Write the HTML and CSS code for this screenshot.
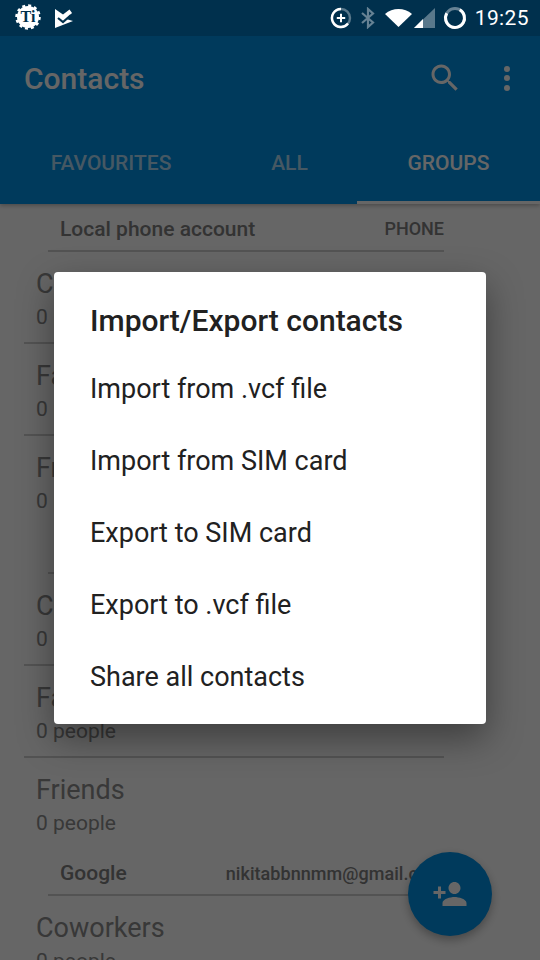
FILE: index.html
```html
<!DOCTYPE html>
<html lang="en">
<head>
    <meta charset="UTF-8">
    <meta name="viewport" content="width=device-width, initial-scale=1.0">
    <title>Contacts</title>
    <link rel="stylesheet" href="styles.css">
</head>
<body>
    <div class="screen">
        <div class="status-bar">
            <div class="status-left">
                <span class="ti-badge">
                    <svg width="28" height="28" viewBox="0 0 28 28">
                        <circle cx="14" cy="14" r="11" fill="#fff"/>
                        <circle cx="14" cy="14" r="11.500" fill="none" stroke="#fff" stroke-width="2.500" stroke-dasharray="3 3"/>
                    </svg>
                    <span class="ti-text">Ti</span>
                </span>
                <svg width="20" height="22" viewBox="0 0 20 22">
                    <path d="M1 2 L9 7.500 L15.500 2.500 L18 6 L12 12 L19 14 L1 21 Z" fill="#fff"/>
                    <path d="M4 11 L9 15 L17 8" stroke="#00304d" stroke-width="2.200" fill="none"/>
                </svg>
            </div>
            <div class="status-right">
                <svg width="22" height="22" viewBox="0 0 22 22">
                    <circle cx="11" cy="11" r="9" fill="none" stroke="#fff" stroke-opacity=".35" stroke-width="2.400"/>
                    <path d="M11 2 A9 9 0 1 0 18 16.600" fill="none" stroke="#fff" stroke-width="2.400"/>
                    <path d="M11 6.800 V15.200 M6.800 11 H15.200" stroke="#fff" stroke-width="2"/>
                </svg>
                <svg class="st-bt" width="16" height="22" viewBox="0 0 16 22">
                    <path d="M2 6 L13 15.500 L8 20 V2 L13 6.500 L2 16" fill="none" stroke="#fff" stroke-opacity=".4" stroke-width="2.200"/>
                </svg>
                <svg class="st-wifi" width="27" height="18" viewBox="0 0 27 18">
                    <path d="M0 5 C7.500 -1.600 19.500 -1.600 27 5 L13.500 18 Z" fill="#fff"/>
                </svg>
                <svg class="st-signal" width="22" height="20" viewBox="0 0 22 20">
                    <path d="M21 0 V20 H0 Z" fill="#fff" fill-opacity=".35"/>
                    <path d="M9 11 V20 H0 Z" fill="#fff"/>
                </svg>
                <svg class="st-ring" width="24" height="24" viewBox="0 0 24 24">
                    <circle cx="12" cy="12" r="9.500" fill="none" stroke="#fff" stroke-opacity=".4" stroke-width="3"/>
                    <path d="M16.750 3.770 A9.500 9.500 0 1 1 3.770 7.250" fill="none" stroke="#fff" stroke-width="3"/>
                </svg>
                <span class="time">19:25</span>
            </div>
        </div>

        <div class="app-header">
            <div class="toolbar">
                <div class="toolbar-title">Contacts</div>
                <svg class="search-icon" width="36" height="36" viewBox="0 0 24 24">
                    <path d="M15.500 14h-.79l-.28-.27C15.410 12.590 16 11.110 16 9.500 16 5.910 13.090 3 9.500 3S3 5.910 3 9.500 5.910 16 9.500 16c1.610 0 3.090-.59 4.230-1.570l.27.28v.79l5 4.990L20.490 19l-4.990-5zm-6 0C7.010 14 5 11.990 5 9.500S7.010 5 9.500 5 14 7.010 14 9.500 11.990 14 9.500 14z" fill="#fff"/>
                </svg>
                <div class="more-icon"><i></i><i></i><i></i></div>
            </div>
            <div class="tabs">
                <div class="tab">FAVOURITES</div>
                <div class="tab">ALL</div>
                <div class="tab active">GROUPS</div>
            </div>
        </div>

        <div class="list">
            <div class="account"><span class="account-name">Local phone account</span><span class="account-type">PHONE</span></div>
            <div class="group"><div class="group-name">Coworkers</div><div class="group-count">0 people</div></div>
            <div class="group"><div class="group-name">Family</div><div class="group-count">0 people</div></div>
            <div class="group last"><div class="group-name">Friends</div><div class="group-count">0 people</div></div>
            <div class="account short"></div>
            <div class="group"><div class="group-name">Coworkers</div><div class="group-count">0 people</div></div>
            <div class="group"><div class="group-name">Family</div><div class="group-count">0 people</div></div>
            <div class="group last"><div class="group-name">Friends</div><div class="group-count">0 people</div></div>
            <div class="account short"><span class="account-name">Google</span><span class="account-type email">nikitabbnnmm@gmail.com</span></div>
            <div class="group"><div class="group-name">Coworkers</div><div class="group-count">0 people</div></div>
        </div>

        <div class="fab">
            <svg width="36" height="36" viewBox="0 0 24 24">
                <path d="M15 12c2.210 0 4-1.790 4-4s-1.790-4-4-4-4 1.790-4 4 1.790 4 4 4zm-9-2V7H4v3H1v2h3v3h2v-3h3v-2H6zm9 4c-2.670 0-8 1.340-8 4v2h16v-2c0-2.660-5.330-4-8-4z" fill="#fff"/>
            </svg>
        </div>

        <div class="scrim"></div>

        <div class="dialog">
            <div class="dialog-title">Import/Export contacts</div>
            <div class="dialog-item">Import from .vcf file</div>
            <div class="dialog-item">Import from SIM card</div>
            <div class="dialog-item">Export to SIM card</div>
            <div class="dialog-item">Export to .vcf file</div>
            <div class="dialog-item">Share all contacts</div>
        </div>
    </div>
</body>
</html>
```

FILE: styles.css
```css
* {
    box-sizing: border-box;
}
html, body {
    margin: 0;
    padding: 0;
}
body {
    font-family: Roboto, Arial, sans-serif;
    background-color: #fff;
}
.screen {
    position: relative;
    width: 540px;
    height: 960px;
    overflow: hidden;
    background-color: #fff;
}

/* status bar sits above the scrim */
.status-bar {
    position: relative;
    z-index: 3;
    height: 36px;
    display: flex;
    justify-content: space-between;
    align-items: center;
    padding: 0 11px 0 14px;
    background-color: #00304d;
}
.status-left {
    display: flex;
    align-items: center;
    gap: 12px;
}
.status-left svg {
    display: block;
}
.ti-badge {
    position: relative;
    display: block;
    width: 28px;
    height: 28px;
    margin-top: -2px;
}
.ti-text {
    position: absolute;
    top: 4px;
    left: 0;
    width: 28px;
    text-align: center;
    font-family: "Liberation Serif", serif;
    font-weight: bold;
    font-size: 16px;
    line-height: 20px;
    color: #00304d;
}
.status-right {
    display: flex;
    align-items: center;
}
.status-right svg {
    display: block;
}
.st-bt {
    margin-left: 8px;
}
.st-wifi {
    margin-left: 9px;
}
.st-signal {
    margin-left: 2px;
}
.st-ring {
    margin-left: 7px;
}
.time {
    margin-left: 8px;
    font-size: 21px;
    letter-spacing: 0.4px;
    color: #fff;
}

.app-header {
    position: relative;
    height: 168px;
    background-color: #0091e6;
    box-shadow: 0 2px 4px rgba(0, 0, 0, 0.25);
}
.toolbar {
    display: flex;
    align-items: center;
    height: 84px;
    padding: 0 24px;
}
.toolbar-title {
    flex: 1;
    font-size: 30px;
    font-weight: 500;
    color: #fff;
}
.search-icon {
    margin-right: 41px;
}
.more-icon {
    display: flex;
    flex-direction: column;
    gap: 3.5px;
    margin-right: 6px;
}
.more-icon i {
    display: block;
    width: 6px;
    height: 6px;
    border-radius: 50%;
    background-color: #fff;
}
.tabs {
    display: grid;
    grid-template-columns: 222px 135px 183px;
    height: 84px;
}
.tab {
    display: flex;
    align-items: center;
    justify-content: center;
    font-size: 21px;
    font-weight: 500;
    color: rgba(255, 255, 255, 0.7);
    padding-top: 5px;
    border-bottom: 3px solid transparent;
}
.tab.active {
    color: #fff;
    border-bottom-color: #fff;
}

.account {
    display: flex;
    justify-content: space-between;
    align-items: center;
    height: 48px;
    margin-left: 48px;
    margin-right: 96px;
    padding: 3px 0 0 12px;
    border-bottom: 2px solid #d0d0d0;
    color: #808080;
}
.account.short {
    height: 47px;
}
.account-name {
    font-size: 21px;
    font-weight: 500;
}
.account-type {
    font-size: 18px;
    font-weight: 500;
}
.account-type.email {
    white-space: nowrap;
    letter-spacing: 0.05px;
}
.group {
    height: 92px;
    margin-left: 24px;
    margin-right: 96px;
    padding: 16px 0 0 12px;
    border-bottom: 2px solid #d0d0d0;
}
.group.last {
    height: 91px;
    border-bottom: none;
}
.group-name {
    font-size: 27px;
    line-height: 32px;
    color: #8c8c8c;
}
.group-count {
    margin-top: 3px;
    font-size: 21px;
    line-height: 28px;
    color: #8c8c8c;
}

.fab {
    position: absolute;
    left: 408px;
    top: 852px;
    width: 84px;
    height: 84px;
    display: flex;
    align-items: center;
    justify-content: center;
    border-radius: 50%;
    background-color: #0091e6;
    box-shadow: 0 4px 10px rgba(0, 0, 0, 0.3);
}
.fab svg {
    display: block;
}

.scrim {
    position: absolute;
    top: 0;
    left: 0;
    right: 0;
    bottom: 0;
    z-index: 1;
    background-color: rgba(0, 0, 0, 0.6);
}

.dialog {
    position: absolute;
    z-index: 2;
    top: 272px;
    left: 54px;
    width: 432px;
    height: 452px;
    padding-top: 25px;
    background-color: #fff;
    border-radius: 4px;
    box-shadow: 0 14px 36px rgba(0, 0, 0, 0.4);
}
.dialog-title {
    height: 56px;
    padding-left: 36px;
    font-size: 30px;
    line-height: 48px;
    font-weight: 500;
    color: #212121;
}
.dialog-item {
    height: 72px;
    line-height: 72px;
    padding-left: 36px;
    font-size: 27px;
    color: #212121;
}
```
